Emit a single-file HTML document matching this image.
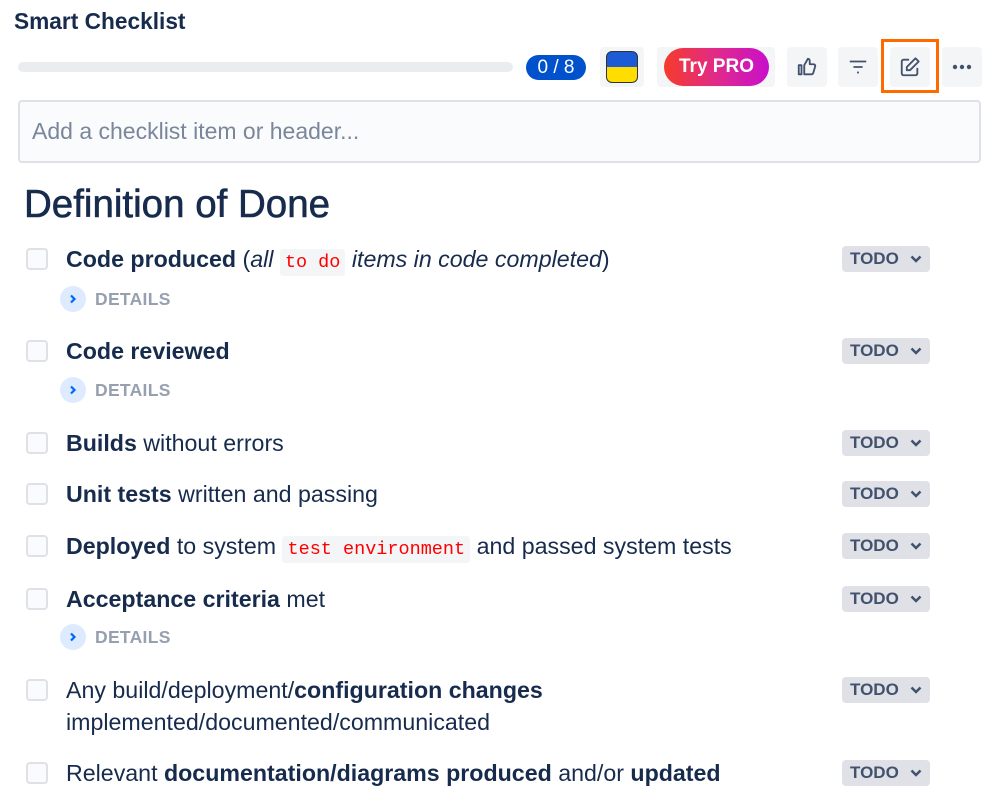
<!DOCTYPE html>
<html><head><meta charset="utf-8"><style>
*{box-sizing:border-box;margin:0;padding:0}
body{width:999px;height:806px;background:#fff;font-family:"Liberation Sans",sans-serif;color:#172b4d;position:relative;overflow:hidden}
.a{position:absolute}
.btn{position:absolute;top:47px;width:40px;height:40px;background:#f4f5f7;border-radius:4px;display:flex;align-items:center;justify-content:center}
.cb{position:absolute;left:26px;width:22px;height:22px;border:2px solid #dfe1e6;border-radius:4px;background:#fafbfc}
.t{position:absolute;left:66px;font-size:23.2px;line-height:32px;white-space:nowrap}
.todo{position:absolute;left:842px;width:88px;height:26px;background:#dfe1e6;border-radius:4px;font-weight:bold;font-size:17px;color:#42526e;line-height:26px;padding-left:8px}
.todo svg{position:absolute;right:8px;top:9px}
.det{position:absolute;left:60px;height:26px;font-weight:bold;font-size:17.5px;color:#97a0af;line-height:26px;padding-left:35px;letter-spacing:.3px}
.det:before{content:"";position:absolute;left:0;top:0;width:26px;height:26px;border-radius:50%;background:#deebff}
.det svg{position:absolute;left:8px;top:8px}
code{font-family:"Liberation Mono",monospace;color:#ff0000;background:#f4f5f7;border-radius:3px;padding:3px 5px;font-size:18.5px}
</style></head><body>
<div class="a" style="left:14px;top:8px;font-size:22.7px;font-weight:bold">Smart Checklist</div>
<div class="a" style="left:18px;top:62px;width:495px;height:10px;background:#ebecf0;border-radius:5px"></div>
<div class="a" style="left:526px;top:55px;width:60px;height:25px;background:#0052cc;border-radius:13px;color:#fff;font-size:19px;text-align:center;line-height:25px">0 / 8</div>
<div class="a" style="left:600px;top:47px;width:44px;height:40px;background:#f4f5f7;border-radius:4px"></div>
<div class="a" style="left:606px;top:51px;width:32px;height:32px;border:1.5px solid #333;border-radius:6px;overflow:hidden;background:linear-gradient(#1c5ad6 50%,#ffdd00 50%)"></div>
<div class="a" style="left:657px;top:47px;width:118px;height:40px;background:#f4f5f7;border-radius:4px"></div>
<div class="a" style="left:664px;top:48px;width:105px;height:38px;border-radius:19px;background:linear-gradient(90deg,#f53b2a,#e02a8a,#c80fcc);color:#fff;font-weight:bold;font-size:19px;text-align:center;line-height:38px">Try PRO</div>
<div class="btn" style="left:787px"><svg width="22" height="22" viewBox="0 0 24 24" fill="none" stroke="#42526e" stroke-width="2" stroke-linejoin="round"><path d="M3 10h3v10H3zM9 10l4-7c2 0 2 2 2 3v3h4c1.5 0 2 1 2 2l-2 7c-.3 1-1 2-2 2H9z"/></svg></div>
<div class="btn" style="left:838px"><svg width="22" height="22" viewBox="0 0 24 24" stroke="#42526e" stroke-width="2"><path d="M3 6h18M7 12h10M11 18h2"/></svg></div>
<div class="a" style="left:881px;top:39px;width:58px;height:54px;border:3px solid #ff6a00"></div>
<div class="btn" style="left:890px"><svg width="22" height="22" viewBox="0 0 24 24" fill="none" stroke="#42526e" stroke-width="2" stroke-linejoin="round"><path d="M11 4H5a2 2 0 0 0-2 2v13a2 2 0 0 0 2 2h13a2 2 0 0 0 2-2v-6"/><path d="M18 2.5l3.5 3.5L12 15.5H8.5V12z"/></svg></div>
<div class="btn" style="left:942px"><svg width="22" height="6" viewBox="0 0 22 6" fill="#42526e"><circle cx="4" cy="3" r="2.2"/><circle cx="11" cy="3" r="2.2"/><circle cx="18" cy="3" r="2.2"/></svg></div>
<div class="a" style="left:18px;top:100px;width:963px;height:63px;border:2px solid #dfe1e6;border-radius:4px;background:#fafbfc;font-size:23px;color:#7a869a;padding:16px 12px">Add a checklist item or header...</div>
<div class="a" style="left:24px;top:183px;font-size:38.5px;line-height:44px;-webkit-text-stroke:.6px #172b4d">Definition of Done</div>

<div class="cb" style="top:248px"></div><div class="t" style="top:243px"><b>Code produced</b> (<i>all</i> <code>to do</code> <i>items in code completed</i>)</div><div class="todo" style="top:246px">TODO<svg width="12" height="8" viewBox="0 0 12 8"><path d="M1.5 1.5 6 6l4.5-4.5" stroke="#42526e" stroke-width="2.5" fill="none"/></svg></div>
<div class="det" style="top:286px"><svg width="10" height="10" viewBox="0 0 10 10"><path d="M3 1.5 6.5 5 3 8.5" stroke="#0065ff" stroke-width="2.2" fill="none"/></svg>DETAILS</div>

<div class="cb" style="top:340px"></div><div class="t" style="top:335px"><b>Code reviewed</b></div><div class="todo" style="top:338px">TODO<svg width="12" height="8" viewBox="0 0 12 8"><path d="M1.5 1.5 6 6l4.5-4.5" stroke="#42526e" stroke-width="2.5" fill="none"/></svg></div>
<div class="det" style="top:377px"><svg width="10" height="10" viewBox="0 0 10 10"><path d="M3 1.5 6.5 5 3 8.5" stroke="#0065ff" stroke-width="2.2" fill="none"/></svg>DETAILS</div>

<div class="cb" style="top:432px"></div><div class="t" style="top:427px"><b>Builds</b> without errors</div><div class="todo" style="top:430px">TODO<svg width="12" height="8" viewBox="0 0 12 8"><path d="M1.5 1.5 6 6l4.5-4.5" stroke="#42526e" stroke-width="2.5" fill="none"/></svg></div>

<div class="cb" style="top:483px"></div><div class="t" style="top:478px"><b>Unit tests</b> written and passing</div><div class="todo" style="top:481px">TODO<svg width="12" height="8" viewBox="0 0 12 8"><path d="M1.5 1.5 6 6l4.5-4.5" stroke="#42526e" stroke-width="2.5" fill="none"/></svg></div>

<div class="cb" style="top:535px"></div><div class="t" style="top:530px"><b>Deployed</b> to system <code>test environment</code> and passed system tests</div><div class="todo" style="top:533px">TODO<svg width="12" height="8" viewBox="0 0 12 8"><path d="M1.5 1.5 6 6l4.5-4.5" stroke="#42526e" stroke-width="2.5" fill="none"/></svg></div>

<div class="cb" style="top:588px"></div><div class="t" style="top:583px"><b>Acceptance criteria</b> met</div><div class="todo" style="top:586px">TODO<svg width="12" height="8" viewBox="0 0 12 8"><path d="M1.5 1.5 6 6l4.5-4.5" stroke="#42526e" stroke-width="2.5" fill="none"/></svg></div>
<div class="det" style="top:624px"><svg width="10" height="10" viewBox="0 0 10 10"><path d="M3 1.5 6.5 5 3 8.5" stroke="#0065ff" stroke-width="2.2" fill="none"/></svg>DETAILS</div>

<div class="cb" style="top:679px"></div><div class="t" style="top:674px">Any build/deployment/<b>configuration changes</b><br>implemented/documented/communicated</div><div class="todo" style="top:677px">TODO<svg width="12" height="8" viewBox="0 0 12 8"><path d="M1.5 1.5 6 6l4.5-4.5" stroke="#42526e" stroke-width="2.5" fill="none"/></svg></div>

<div class="cb" style="top:762px"></div><div class="t" style="top:757px">Relevant <b>documentation/diagrams produced</b> and/or <b>updated</b></div><div class="todo" style="top:760px">TODO<svg width="12" height="8" viewBox="0 0 12 8"><path d="M1.5 1.5 6 6l4.5-4.5" stroke="#42526e" stroke-width="2.5" fill="none"/></svg></div>
</body></html>
